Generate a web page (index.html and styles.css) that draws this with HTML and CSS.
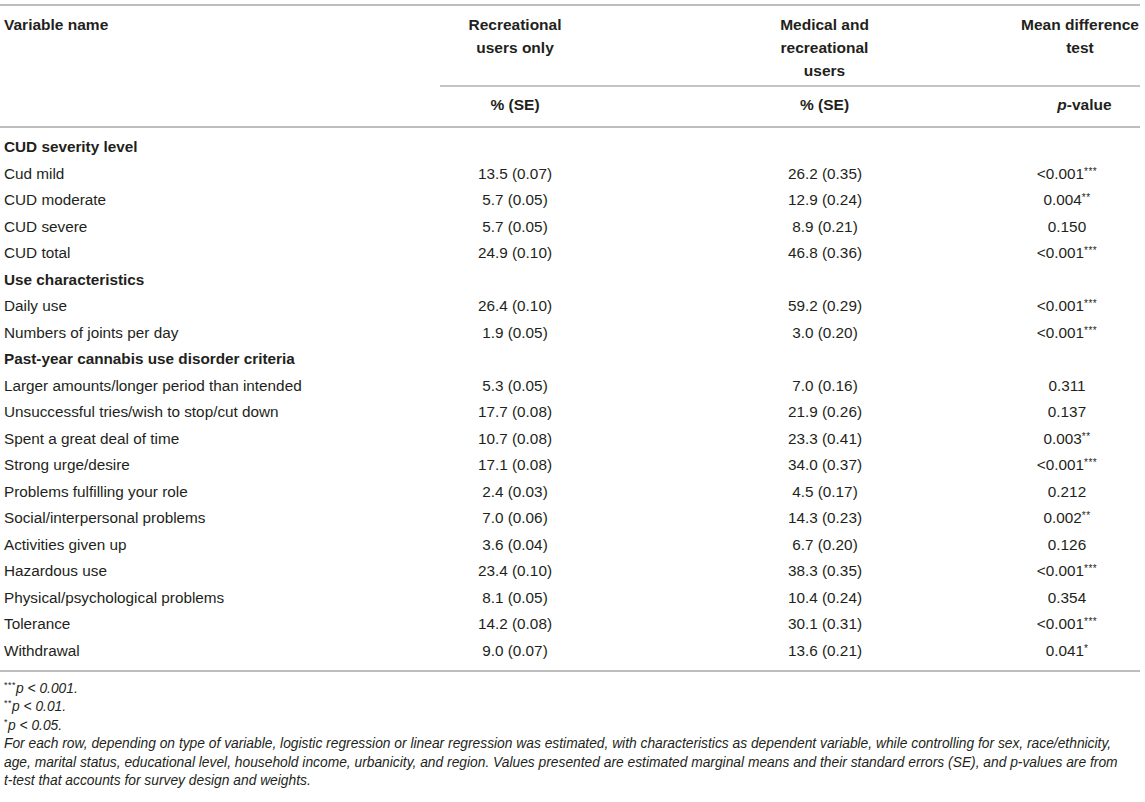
FILE: index.html
```html
<!DOCTYPE html>
<html lang="en">
<head>
<meta charset="utf-8">
<title>Table</title>
<link rel="stylesheet" href="styles.css">
</head>
<body>
<div class="wrap">
<table class="data">
  <colgroup>
    <col class="c1"><col class="c2"><col class="c3"><col class="c4">
  </colgroup>
  <thead>
    <tr class="h1">
      <th class="name">Variable name</th>
      <th class="v2 sub">Recreational<br>users only</th>
      <th class="v3 sub">Medical and<br>recreational<br>users</th>
      <th class="v4 sub">Mean difference<br>test</th>
    </tr>
    <tr class="h2">
      <th class="name"></th>
      <th class="v2">% (SE)</th>
      <th class="v3">% (SE)</th>
      <th class="v4"><i>p</i>-value</th>
    </tr>
  </thead>
  <tbody>
    <tr class="first"><td class="sec">CUD severity level</td><td class="v2"></td><td class="v3"></td><td class="v4"></td></tr>
    <tr><td>Cud mild</td><td class="v2">13.5 (0.07)</td><td class="v3">26.2 (0.35)</td><td class="v4">&lt;0.001<sup>***</sup></td></tr>
    <tr><td>CUD moderate</td><td class="v2">5.7 (0.05)</td><td class="v3">12.9 (0.24)</td><td class="v4">0.004<sup>**</sup></td></tr>
    <tr><td>CUD severe</td><td class="v2">5.7 (0.05)</td><td class="v3">8.9 (0.21)</td><td class="v4">0.150</td></tr>
    <tr><td>CUD total</td><td class="v2">24.9 (0.10)</td><td class="v3">46.8 (0.36)</td><td class="v4">&lt;0.001<sup>***</sup></td></tr>
    <tr><td class="sec">Use characteristics</td><td class="v2"></td><td class="v3"></td><td class="v4"></td></tr>
    <tr><td>Daily use</td><td class="v2">26.4 (0.10)</td><td class="v3">59.2 (0.29)</td><td class="v4">&lt;0.001<sup>***</sup></td></tr>
    <tr><td>Numbers of joints per day</td><td class="v2">1.9 (0.05)</td><td class="v3">3.0 (0.20)</td><td class="v4">&lt;0.001<sup>***</sup></td></tr>
    <tr><td class="sec">Past-year cannabis use disorder criteria</td><td class="v2"></td><td class="v3"></td><td class="v4"></td></tr>
    <tr><td>Larger amounts/longer period than intended</td><td class="v2">5.3 (0.05)</td><td class="v3">7.0 (0.16)</td><td class="v4">0.311</td></tr>
    <tr><td>Unsuccessful tries/wish to stop/cut down</td><td class="v2">17.7 (0.08)</td><td class="v3">21.9 (0.26)</td><td class="v4">0.137</td></tr>
    <tr><td>Spent a great deal of time</td><td class="v2">10.7 (0.08)</td><td class="v3">23.3 (0.41)</td><td class="v4">0.003<sup>**</sup></td></tr>
    <tr><td>Strong urge/desire</td><td class="v2">17.1 (0.08)</td><td class="v3">34.0 (0.37)</td><td class="v4">&lt;0.001<sup>***</sup></td></tr>
    <tr><td>Problems fulfilling your role</td><td class="v2">2.4 (0.03)</td><td class="v3">4.5 (0.17)</td><td class="v4">0.212</td></tr>
    <tr><td>Social/interpersonal problems</td><td class="v2">7.0 (0.06)</td><td class="v3">14.3 (0.23)</td><td class="v4">0.002<sup>**</sup></td></tr>
    <tr><td>Activities given up</td><td class="v2">3.6 (0.04)</td><td class="v3">6.7 (0.20)</td><td class="v4">0.126</td></tr>
    <tr><td>Hazardous use</td><td class="v2">23.4 (0.10)</td><td class="v3">38.3 (0.35)</td><td class="v4">&lt;0.001<sup>***</sup></td></tr>
    <tr><td>Physical/psychological problems</td><td class="v2">8.1 (0.05)</td><td class="v3">10.4 (0.24)</td><td class="v4">0.354</td></tr>
    <tr><td>Tolerance</td><td class="v2">14.2 (0.08)</td><td class="v3">30.1 (0.31)</td><td class="v4">&lt;0.001<sup>***</sup></td></tr>
    <tr class="last"><td>Withdrawal</td><td class="v2">9.0 (0.07)</td><td class="v3">13.6 (0.21)</td><td class="v4">0.041<sup>*</sup></td></tr>
  </tbody>
</table>
<div class="notes">
  <p><sup>***</sup>p &lt; 0.001.</p>
  <p><sup>**</sup>p &lt; 0.01.</p>
  <p><sup>*</sup>p &lt; 0.05.</p>
  <p>For each row, depending on type of variable, logistic regression or linear regression was estimated, with characteristics as dependent variable, while controlling for sex, race/ethnicity, age, marital status, educational level, household income, urbanicity, and region. Values presented are estimated marginal means and their standard errors (SE), and p-values are from <span class="nobr">t-test</span> that accounts for survey design and weights.</p>
</div>
</div>
</body>
</html>
```

FILE: styles.css
```css
html, body {
  margin: 0;
  padding: 0;
  background: #ffffff;
}

body {
  font-family: "Liberation Sans", Arial, Helvetica, sans-serif;
  color: #231f20;
  font-size: 15.3px;
}

.wrap {
  width: 1140px;
  padding-top: 4px;
}

.data {
  width: 1140px;
  border-collapse: collapse;
  table-layout: fixed;
  border-top: 2px solid #bdbdbd;
  border-bottom: 2px solid #bdbdbd;
}

.c1 { width: 440px; }
.c2 { width: 150px; }
.c3 { width: 430px; }
.c4 { width: 120px; }

th {
  font-weight: bold;
  font-size: 15.5px;
  line-height: 23px;
  vertical-align: top;
  white-space: nowrap;
}

th.name {
  text-align: left;
  padding-left: 4px;
}

.h1 th {
  padding-top: 7px;
  padding-bottom: 3px;
}

.h1 th.sub {
  border-bottom: 2px solid #c4c4c4;
}

.h2 th {
  padding-top: 6px;
  padding-bottom: 10px;
  border-bottom: 2px solid #bdbdbd;
}

td {
  line-height: 18.5px;
  padding: 4px 0;
  white-space: nowrap;
  vertical-align: middle;
}

td:first-child {
  padding-left: 4px;
  text-align: left;
}

td.sec {
  font-weight: bold;
}

.v2 {
  text-align: center;
}

.v3 {
  text-align: center;
  padding-left: 40px;
}

.h1 th.v4 {
  text-align: center;
  padding: 7px 0 3px 0;
}

.h2 th.v4 {
  text-align: center;
  padding-left: 10px;
}

td.v4 {
  text-align: center;
  padding-right: 26px;
}

tr.first td {
  padding-top: 10px;
}

tr.last td {
  padding-bottom: 10px;
}

sup {
  font-size: 10px;
  line-height: 0;
  letter-spacing: 0.5px;
  vertical-align: 4px;
}

.notes {
  padding: 8px 4px 0 4px;
  font-size: 13.8px;
  font-style: italic;
  line-height: 18.4px;
}

.notes p {
  margin: 0;
}

.nobr {
  white-space: nowrap;
}

.notes sup {
  font-style: normal;
  font-size: 9px;
  letter-spacing: 0.5px;
  vertical-align: 5px;
}
```
